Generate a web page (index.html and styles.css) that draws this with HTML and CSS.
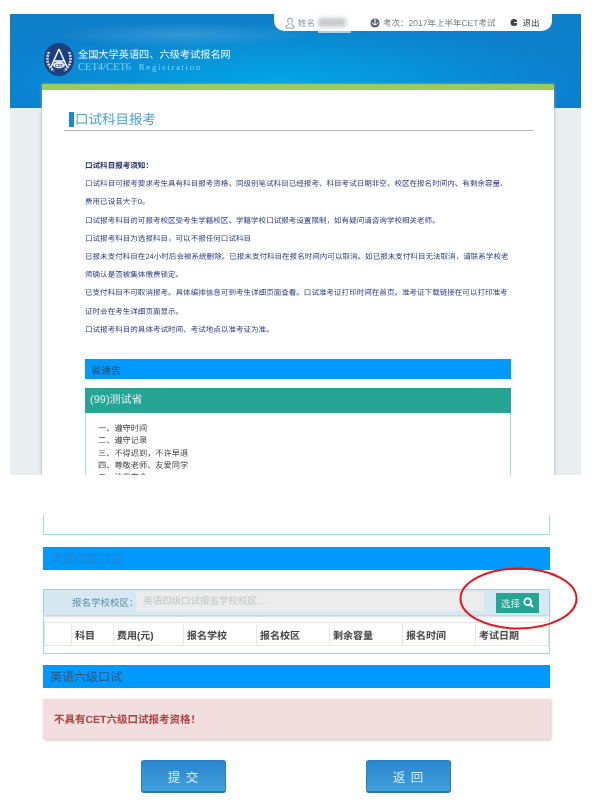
FILE: index.html

```html
<!DOCTYPE html>
<html lang="zh-CN">
<head>
  <meta charset="UTF-8" />
  <meta name="viewport" content="width=device-width, initial-scale=1.0"/>
  <title>口试科目报考</title>
  <link rel="stylesheet" href="styles.css">
</head>
<body>
  <div class="upper">
    <div class="topbar">
      <div class="tab">
        <span class="tab-item user">
          <svg width="10" height="12" viewBox="0 0 10 12"><path d="M5 1a2.4 2.4 0 0 0-2.4 2.6c0 1.4.7 2.4 1.2 3 .3.5 0 1-.6 1.300L1 9v2h8V9L6.800 7.900c-.6-.3-.9-.8-.6-1.300.5-.6 1.200-1.600 1.200-3A2.400 2.400 0 0 0 5 1z" fill="none" stroke="#8a8f94" stroke-width=".9"/></svg>
          姓名
        </span>
        <span class="name-box"><span class="smudge"></span></span>
        <span class="tab-item exam">
          <svg width="10" height="10" viewBox="0 0 10 10"><circle cx="5" cy="5" r="4.600" fill="#5b6670"/><path d="M5 1v5M2 4.500c.5 1.500 1.500 2 3 2s2.500-.5 3-2" fill="none" stroke="#fff" stroke-width="1"/></svg>
          考次：2017年上半年CET考试
        </span>
        <span class="tab-item logout">
          <svg width="9" height="9" viewBox="0 0 9 9"><circle cx="4" cy="4.500" r="3.500" fill="#444"/><path d="M4 4.500h5M7 3l1.500 1.500L7 6" fill="none" stroke="#fff" stroke-width="1"/></svg>
          退出
        </span>
      </div>
    </div>

    <div class="brand">
      <svg class="logo" width="30" height="33" viewBox="0 0 30 33">
        <ellipse cx="15" cy="16.500" rx="15" ry="16.500" fill="#1c3f7e"/>
        <path d="M5 9c-3 6-2 14 5 19M25 9c3 6 2 14-5 19" fill="none" stroke="#d6dee8" stroke-width="2.600" stroke-dasharray="2 1"/>
        <path d="M15 6L7 24M15 6l8 18M10 18h10" fill="none" stroke="#fff" stroke-width="1.500"/>
        <ellipse cx="15" cy="22" rx="6" ry="3.200" fill="#e6ebf2"/>
        <text x="15" y="24" class="logo-text" text-anchor="middle">CET</text>
      </svg>
      <div class="brand-text">
        <div class="brand-cn">全国大学英语四、六级考试报名网</div>
        <div class="brand-en">CET4/CET6 <span>Registration</span></div>
      </div>
    </div>

    <div class="card">
      <h1 class="title"><span>口试科目报考</span></h1>

      <div class="notice">
        <p><b>口试科目报考须知：</b></p>
        <p>口试科目可报考要求考生具有科目报考资格、同级别笔试科目已经报考、科目考试日期非空、校区在报名时间内、有剩余容量、费用已设且大于0。</p>
        <p>口试报考科目的可报考校区受考生学籍校区、学籍学校口试报考设置限制，如有疑问请咨询学校相关老师。</p>
        <p>口试报考科目为选报科目，可以不报任何口试科目</p>
        <p>已报未支付科目在24小时后会被系统删除。已报未支付科目在报名时间内可以取消。如已报未支付科目无法取消，请联系学校老师确认是否被集体缴费锁定。</p>
        <p>已支付科目不可取消报考。具体编排信息可到考生详细页面查看。口试准考证打印时间在首页。准考证下载链接在可以打印准考证时会在考生详细页面显示。</p>
        <p>口试报考科目的具体考试时间、考试地点以准考证为准。</p>
      </div>

      <div class="bar bar-small">省通告</div>
      <div class="province">
        <div class="province-head">(99)测试省</div>
        <div class="province-body">
          一、遵守时间<br>
          二、遵守记录<br>
          三、不得迟到，不许早退<br>
          四、尊敬老师、友爱同学<br>
          五、注意安全
        </div>
      </div>
    </div>
  </div>

  <div class="lower">
    <div class="box-end"></div>

    <div class="bar bar-faint">英语四级口试</div>

    <div class="oral">
      <div class="pick">
        <label class="pick-label">报名学校校区：</label>
        <div class="pick-input">英语四级口试报名学校校区 ...</div>
        <button class="pick-btn">选择
          <svg width="11" height="11" viewBox="0 0 11 11"><circle cx="4.700" cy="4.700" r="3.400" fill="none" stroke="#fff" stroke-width="1.700"/><path d="M7.300 7.300L10 10" stroke="#fff" stroke-width="2"/></svg>
        </button>
      </div>
      <table class="subjects">
        <tr>
          <th></th>
          <th>科目</th>
          <th>费用(元)</th>
          <th>报名学校</th>
          <th>报名校区</th>
          <th>剩余容量</th>
          <th>报名时间</th>
          <th>考试日期</th>
        </tr>
      </table>
    </div>

    <div class="bar">英语六级口试</div>
    <div class="alert">不具有CET六级口试报考资格！</div>

    <div class="actions">
      <button class="btn">提 交</button>
      <button class="btn">返 回</button>
    </div>

    <svg class="circle-mark" width="121" height="65" viewBox="0 0 121 65">
      <ellipse cx="60.500" cy="32.500" rx="58" ry="30" fill="none" stroke="#e8141c" stroke-width="2"/>
    </svg>
  </div>
</body>
</html>
```

FILE: styles.css

```css
html, body {
  margin: 0;
  padding: 0;
  background-color: #fff;
}

body {
  width: 592px;
  height: 801px;
  overflow: hidden;
  font-family: "Liberation Sans", "Noto Sans CJK SC", sans-serif;
  text-rendering: geometricPrecision;
}

/* top half of the picture */
.upper {
  margin: 14px 0 0 10px;
  width: 571px;
  height: 461px;
  overflow: hidden;
  background-color: #e9eef1;
  background-image: radial-gradient(ellipse 130px 12px at 30% 22%, rgba(90, 170, 225, .5) 0%, rgba(90, 170, 225, 0) 100%), radial-gradient(ellipse 300px 60px at 47% 72%, #02a6e4 0%, rgba(2, 166, 228, 0) 100%), linear-gradient(#0f7fc8, #0a7fd0);
  background-size: 100% 94px;
  background-repeat: no-repeat;
  filter: blur(.4px);
}

.topbar {
  display: flex;
  justify-content: flex-end;
  padding-right: 29px;
}

.tab {
  display: flex;
  align-items: center;
  width: 278px;
  height: 17px;
  box-sizing: border-box;
  padding-left: 11px;
  background-color: #fff;
  border-radius: 0 0 10px 10px;
  font-size: 8.500px;
  color: #8d9296;
}

.tab-item {
  display: flex;
  align-items: center;
  gap: 3px;
}

.name-box {
  display: flex;
  align-items: center;
  flex: none;
  width: 33px;
  height: 19px;
  margin: 2px 0 0 3px;
  border-bottom: 2px solid #a8d2ea;
  box-sizing: border-box;
}

.smudge {
  display: block;
  width: 28px;
  height: 9px;
  background-color: #c6c8cc;
  filter: blur(2px);
}

.exam {
  margin-left: 19px;
  color: #757c82;
}

.logout {
  margin-left: 15px;
  color: #333;
}

.brand {
  display: flex;
  align-items: center;
  gap: 4px;
  height: 53px;
  box-sizing: border-box;
  padding: 4px 0 0 34px;
}

.brand-text {
  padding-top: 3px;
}

.logo-text {
  font-size: 4px;
  font-weight: bold;
  fill: #1c3f7e;
}

.brand-cn {
  font-size: 10.200px;
  line-height: 13px;
  color: #f0f8fc;
}

.brand-en {
  font-family: "Liberation Serif", serif;
  font-size: 10.500px;
  line-height: 11px;
  color: #82d3f0;
}

.brand-en span {
  margin-left: 5px;
  font-size: 9px;
  letter-spacing: 1.600px;
}

.card {
  margin-left: 32px;
  width: 512px;
  height: 400px;
  box-sizing: border-box;
  padding: 22px 21px 0 22px;
  background-color: #fff;
  border-top: 6px solid #9ccb5c;
  box-shadow: 0 0 3px #99a0a6;
}

.title {
  margin: 0;
  padding-bottom: 3px;
  border-bottom: 1px solid #b5b8bb;
  font-size: 13.500px;
  line-height: 15px;
  font-weight: normal;
  color: #4aa3dc;
}

.title span {
  display: block;
  margin-left: 5px;
  padding-left: 1px;
  border-left: 5px solid #1a8ad8;
}

.notice {
  margin: 26px 0 0 21px;
  width: 424px;
  font-size: 7.550px;
  line-height: 18.200px;
  color: #2f4086;
}

.notice p {
  margin: 0;
}

.notice b {
  color: #26336b;
}

.bar {
  display: flex;
  align-items: center;
  width: 507px;
  height: 23px;
  box-sizing: border-box;
  padding-left: 7px;
  background-color: #0099ff;
  font-size: 12px;
  color: #31566f;
}

.bar-faint {
  color: #2585c8;
}

.bar-small {
  width: 426px;
  height: 20px;
  margin: 20px 0 0 21px;
  padding-left: 6px;
  font-size: 10px;
  color: #26506e;
}

.province {
  width: 426px;
  margin: 9px 0 0 21px;
  box-sizing: border-box;
  border: 1px solid #9fe3d8;
  height: 120px;
}

.province-head {
  height: 25px;
  line-height: 25px;
  padding-left: 5px;
  margin: -1px -1px 0 -1px;
  background-color: #26a594;
  font-size: 11px;
  color: #dff3ef;
}

.province-body {
  padding: 10px 0 0 12px;
  font-size: 8.200px;
  line-height: 12.300px;
  color: #444;
}

/* bottom half of the picture */
.lower {
  position: relative;
  height: 326px;
  box-sizing: border-box;
  padding: 40px 0 0 43px;
  filter: blur(.3px);
}

.box-end {
  width: 507px;
  height: 20px;
  box-sizing: border-box;
  border: 1px solid #9fe3d8;
  border-top: 0;
}

.lower .bar-faint {
  margin-top: 12px;
}

.oral {
  width: 507px;
  height: 65px;
  margin-top: 19px;
  box-sizing: border-box;
  border: 1.500px solid #8fe3d8;
}

.pick {
  display: flex;
  align-items: center;
  height: 25px;
  background-color: #d6e9f2;
  box-shadow: 0 1px 3px #b4bcc0;
}

.pick-label {
  margin: 0 0 2px 28px;
  width: 64px;
  font-size: 9.500px;
  white-space: nowrap;
  color: #5a8aa8;
}

.pick-input {
  width: 348px;
  height: 19px;
  margin-bottom: 2px;
  line-height: 19px;
  padding-left: 7px;
  box-sizing: border-box;
  background-color: #ececec;
  font-size: 9.500px;
  color: #c0c4c6;
}

.pick-btn {
  display: flex;
  align-items: center;
  justify-content: center;
  gap: 3px;
  width: 43px;
  height: 20px;
  margin-left: 12px;
  padding: 0;
  border: none;
  background-color: #26a594;
  font-family: inherit;
  font-size: 9.500px;
  color: #d9f1ed;
}

.subjects {
  width: 100%;
  margin-top: 7px;
  border-collapse: collapse;
  table-layout: fixed;
}

.subjects th {
  height: 23px;
  padding: 0 0 0 3px;
  box-sizing: border-box;
  border: 1px solid #e6e6e6;
  text-align: left;
  font-size: 10px;
  color: #444;
}

.subjects th:first-child { width: 27px; }
.subjects th:nth-child(2) { width: 42px; }
.subjects th:nth-child(3) { width: 70px; }
.subjects th:nth-child(4),
.subjects th:nth-child(5),
.subjects th:nth-child(6),
.subjects th:nth-child(7) { width: 73px; }

.oral + .bar {
  margin-top: 11px;
}

.alert {
  display: flex;
  align-items: center;
  width: 507px;
  height: 40px;
  margin-top: 11px;
  box-sizing: border-box;
  padding-left: 11px;
  background-color: #f2dede;
  box-shadow: 1px 1px 3px #c9bcbc;
  font-size: 10.500px;
  font-weight: bold;
  color: #a94442;
}

.actions {
  display: flex;
  gap: 140px;
  margin: 21px 0 0 98px;
}

.btn {
  width: 85px;
  height: 33px;
  padding: 0;
  border: 1px solid #2f7fbd;
  border-bottom: 2px solid #2b76b0;
  border-radius: 3px;
  background-image: linear-gradient(#2a85cf, #42a0dc);
  font-family: inherit;
  font-size: 12.500px;
  letter-spacing: 1px;
  color: #d8eefa;
}

/* red hand drawn mark over the select button */
.circle-mark {
  position: absolute;
  left: 458px;
  top: 91px;
}
```
